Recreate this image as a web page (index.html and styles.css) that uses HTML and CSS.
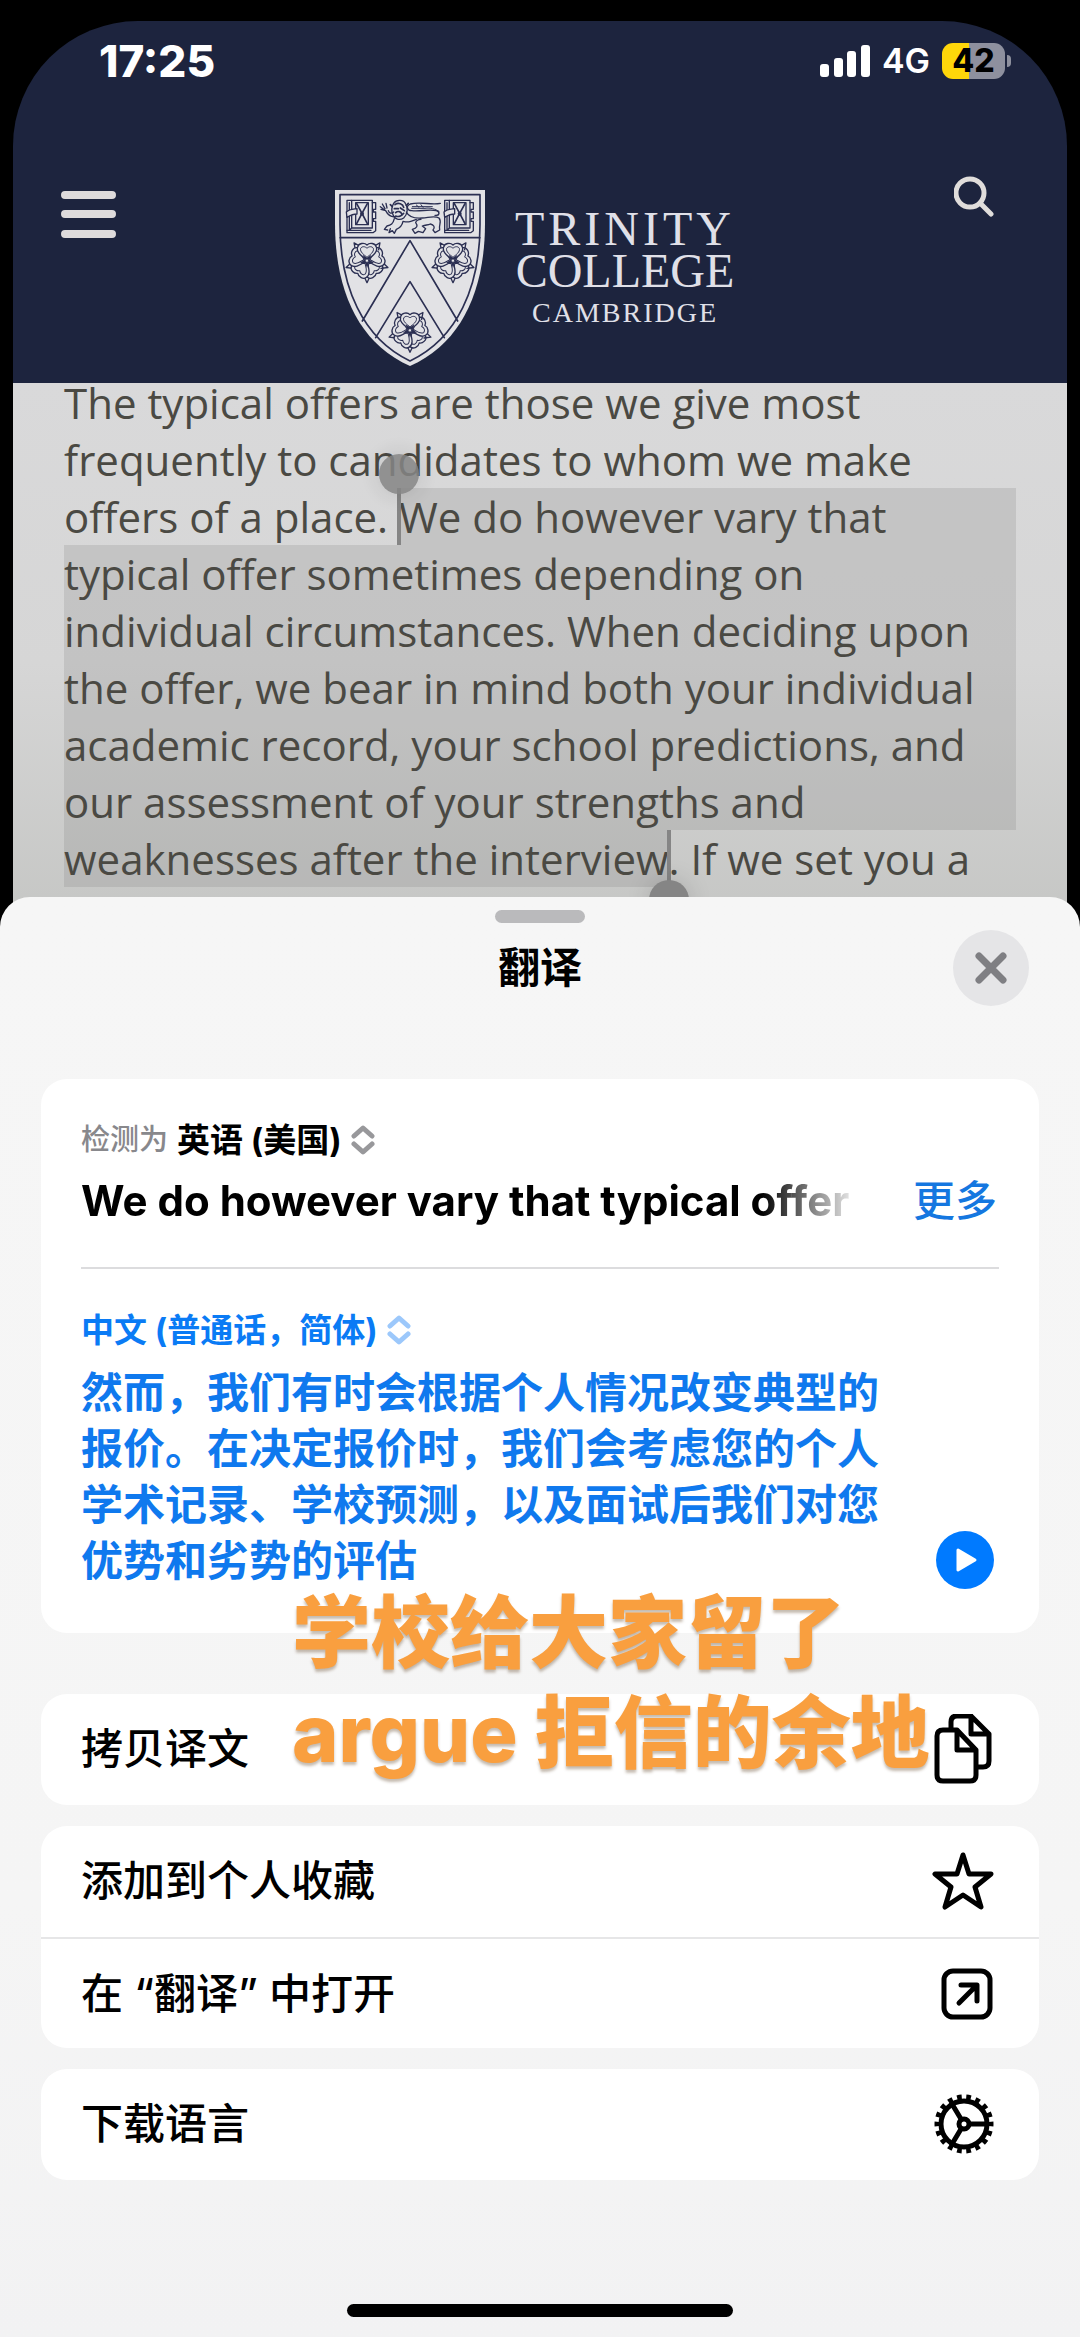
FILE: index.html
```html
<!DOCTYPE html>
<html lang="zh-CN">
<head>
  <meta charset="UTF-8">
  <meta name="viewport" content="width=device-width, initial-scale=1.0">
  <title>翻译</title>
  <link rel="stylesheet" href="styles.css">
</head>
<body>
  <div class="page">
    <header class="header">
      <div class="status">
        <span class="time">17:25</span>
        <svg class="signal" width="50" height="32" viewBox="0 0 50 32" fill="#fff">
          <rect x="0" y="19" width="9" height="13" rx="3"/>
          <rect x="14" y="13" width="9" height="19" rx="3"/>
          <rect x="27" y="6" width="9" height="26" rx="3"/>
          <rect x="41" y="0" width="9" height="32" rx="3"/>
        </svg>
        <span class="network">4G</span>
        <span class="battery">42</span>
      </div>

      <nav class="nav">
        <button class="icon-button menu" aria-label="Menu">
          <svg width="55" height="48" viewBox="0 0 55 48" stroke="#dedbdc" stroke-width="8" stroke-linecap="round">
            <path d="M4 5H51M4 24H51M4 44H51"/>
          </svg>
        </button>

        <a class="logo" href="#">
          <svg width="150" height="176" viewBox="0 0 450 528" fill="none" stroke="#2b2f52" stroke-width="4" stroke-linejoin="round" stroke-linecap="round">
            <defs>
              <g id="petal">
                <path d="M-9 -47L0 -66L9 -47" transform="rotate(36)"/>
                <path fill="#e2e2e5" d="M0 0C-12 -12 -34 -24 -28 -41C-25 -53 -8 -55 0 -47C8 -55 25 -53 28 -41C34 -24 12 -12 0 0Z"/>
                <path stroke-width="3" d="M0 -10C-9 -18 -22 -26 -19 -37C-15 -44 -5 -43 0 -37C5 -43 15 -44 19 -37C22 -26 9 -18 0 -10"/>
              </g>
              <g id="rose">
                <use href="#petal" transform="rotate(144)"/>
                <use href="#petal" transform="rotate(216)"/>
                <use href="#petal" transform="rotate(72)"/>
                <use href="#petal" transform="rotate(288)"/>
                <use href="#petal"/>
                <path fill="#2b2f52" stroke="none" d="M0 22L-5 8L-21 7L-8 -3L-13 -18L0 -9L13 -18L8 -3L21 7L5 8Z"/>
                <circle r="5" fill="#e2e2e5" stroke-width="2"/>
              </g>
              <g id="book">
                <path d="M36 31H112V38H122V58H115V66H122V86H115V94H122V122L114 128H36Z"/>
                <path d="M43 38V121H108M50 31V114H112V38M62 38H100V104H62ZM36 121H43M50 114L43 121"/>
                <path d="M65 41L81 70L65 101M97 41L81 70L97 101" stroke-width="5"/>
                <path fill="#e2e2e5" d="M34 66C42 58 52 58 66 56V72C54 72 46 76 36 82Z"/>
                <circle cx="81" cy="71" r="6" fill="#2b2f52" stroke="none"/>
              </g>
            </defs>
            <path fill="#e2e2e5" stroke="none" d="M0 0H450V100C450 300 380 460 225 528C70 460 0 300 0 100Z"/>
            <path stroke-width="5" d="M15 14H435V104C435 290 367 446 225 513C83 446 15 290 15 104ZM15 143H435M82 393L225 152L368 393M122 443L225 275L328 443"/>
            <use href="#book"/>
            <use href="#book" transform="translate(293 0)"/>
            <!-- lion -->
            <path d="M182 80C168 82 158 74 152 62L138 58M152 62L136 50M150 56L142 42M156 54L153 40M160 62C162 70 170 72 176 66"/>
            <path d="M176 40C184 28 206 28 212 42C220 54 218 72 206 84C194 92 178 88 174 74C168 62 170 50 176 40Z"/>
            <path stroke-width="5" d="M180 44C190 36 204 42 206 52M178 56H190M196 54L208 62M182 68C188 62 198 64 200 72M182 78C190 82 200 78 206 70M172 50L166 44M214 46L220 40"/>
            <path d="M178 86C174 102 168 106 156 108L148 118L158 120M166 116L162 128L172 122L178 130L184 118C194 114 202 104 204 94C222 98 230 94 244 88"/>
            <path d="M214 66C222 82 240 86 262 84C284 82 300 76 312 84C322 96 310 104 314 120L300 128L294 120C302 112 296 104 286 102C278 106 272 104 262 108L272 116L264 128L250 124L240 130L232 118C246 114 250 108 242 98C244 90 250 88 258 88"/>
            <path d="M316 40C290 46 256 34 226 42C212 48 216 62 230 62C256 66 280 56 304 62C316 66 314 78 300 76"/>
            <path stroke-width="3" d="M232 50H292M230 55H270C286 52 302 58 312 64M244 45L252 52M258 44L264 52"/>
            <use href="#rose" transform="translate(96 212)"/>
            <use href="#rose" transform="translate(354 212)"/>
            <use href="#rose" transform="translate(225 421)"/>
          </svg>
          <span class="logo-text">
            <span class="logo-trinity">TRINITY</span>
            <span>COLLEGE</span>
            <span class="logo-place">CAMBRIDGE</span>
          </span>
        </a>

        <button class="icon-button" aria-label="Search">
          <svg width="40" height="41" viewBox="0 0 40 41" fill="none" stroke="#e0dddb" stroke-width="5" stroke-linecap="round">
            <circle cx="16" cy="17" r="14"/>
            <path d="M26 27L37 38"/>
          </svg>
        </button>
      </nav>
    </header>

    <main class="article" lang="en">
      <p class="article-text">
        <span class="line">The typical offers are those we give most</span>
        <span class="line">frequently to candidates to whom we make</span>
        <span class="line">offers of a place. <mark class="fill handle-start">We do however vary that</mark></span>
        <mark class="line">typical offer sometimes depending on</mark>
        <mark class="line">individual circumstances. When deciding upon</mark>
        <mark class="line">the offer, we bear in mind both your individual</mark>
        <mark class="line">academic record, your school predictions, and</mark>
        <mark class="line">our assessment of your strengths and</mark>
        <span class="line"><mark class="handle-end">weaknesses after the interview</mark>. If we set you a</span>
        <span class="line">more challenging offer, this is because we</span>
      </p>
    </main>
  </div>

  <section class="sheet">
    <div class="grabber"></div>
    <div class="sheet-header">
      <h1 class="title">翻译</h1>
      <button class="close" aria-label="关闭">
        <svg width="32" height="32" viewBox="0 0 32 32" stroke="#7f7f83" stroke-width="7" stroke-linecap="round">
          <path d="M4 4L28 28M28 4L4 28"/>
        </svg>
      </button>
    </div>

    <div class="card translation">
      <button class="language">
        <span class="detected">检测为</span>
        <span>英语 (美国)</span>
        <svg class="chevrons" width="24" height="30" viewBox="0 0 24 30">
          <path d="M3 11L12 3L21 11M3 19L12 27L21 19"/>
        </svg>
      </button>
      <div class="source">
        <p class="source-text" lang="en">We do however vary that typical offer</p>
        <button class="more">更多</button>
      </div>
      <hr class="divider">
      <button class="language target">
        <span>中文 (普通话，简体)</span>
        <svg class="chevrons" width="24" height="30" viewBox="0 0 24 30">
          <path d="M3 11L12 3L21 11M3 19L12 27L21 19"/>
        </svg>
      </button>
      <div class="result">
        <p class="result-text">然而，我们有时会根据个人情况改变典型的报价。在决定报价时，我们会考虑您的个人学术记录、学校预测，以及面试后我们对您优势和劣势的评估</p>
        <button class="play" aria-label="播放">
          <svg width="58" height="58" viewBox="0 0 58 58">
            <path fill="#fff" stroke="#fff" stroke-width="3" stroke-linejoin="round" d="M22 19L39 29L22 39Z"/>
          </svg>
        </button>
      </div>
      <p class="note">学校给大家留了<br>argue 拒信的余地</p>
    </div>

    <div class="card">
      <button class="action">
        拷贝译文
        <svg class="icon" width="62" height="70" viewBox="0 0 62 70">
          <path d="M19 15V8Q19 2 25 2H39L57 20V47Q57 53 51 53H46M39 2V20H57"/>
          <path d="M11 16H25L44 36V61Q44 67 38 67H11Q5 67 5 61V22Q5 16 11 16ZM25 16V36H44"/>
        </svg>
      </button>
    </div>

    <div class="card">
      <button class="action">
        添加到个人收藏
        <svg class="icon" width="62" height="70" viewBox="0 0 62 70">
          <path d="M31 9L37 28H59L43 41L49 61L31 49L13 61L19 41L3 28H25Z"/>
        </svg>
      </button>
      <button class="action">
        在 “翻译” 中打开
        <svg class="icon" width="62" height="70" viewBox="0 0 62 70">
          <rect x="12" y="12" width="46" height="46" rx="9"/>
          <path d="M27 44L44 27M29 26H45V42"/>
        </svg>
      </button>
    </div>

    <div class="card">
      <button class="action">
        下载语言
        <svg class="icon" width="62" height="70" viewBox="0 0 62 70">
          <circle class="teeth" cx="32" cy="35" r="26" pathLength="36"/>
          <circle cx="32" cy="35" r="23"/>
          <circle cx="32" cy="35" r="5"/>
          <path d="M38 35H54M29 30L20 15M29 40L20 55"/>
        </svg>
      </button>
    </div>

    <div class="home-bar"></div>
  </section>
</body>
</html>
```

FILE: styles.css
```css
* {
  margin: 0;
  padding: 0;
  box-sizing: border-box;
}

body {
  min-height: 100vh;
  display: flex;
  flex-direction: column;
  background-color: #000;
  color: #000;
  font-family: Inter, "Noto Sans CJK SC", sans-serif;
}

button {
  border: none;
  background: none;
  color: inherit;
  font: inherit;
  cursor: pointer;
}

svg {
  display: block;
  flex: none;
}

/* Web page behind the sheet */
.page {
  margin: 21px 13px 0;
  border-radius: 125px 125px 0 0;
  overflow: hidden;
}

.header {
  background-color: #1d243e;
  color: #fff;
  padding-bottom: 17px;
}

.status {
  display: flex;
  align-items: center;
  padding: 22px 62px 0 86px;
}

.time {
  margin-right: auto;
  font-size: 44px;
  line-height: 36px;
  font-weight: 800;
}

.network {
  margin: 0 12px;
  font-size: 34px;
  line-height: 36px;
  font-weight: 600;
}

.battery {
  position: relative;
  width: 63px;
  border-radius: 11px;
  background: linear-gradient(to right, #ffd60a 43%, #8e909e 43%);
  color: #000;
  font-size: 32px;
  line-height: 36px;
  font-weight: 800;
  text-align: center;
}

.battery::after {
  content: "";
  position: absolute;
  left: 65px;
  top: 12px;
  width: 4px;
  height: 12px;
  border-radius: 0 4px 4px 0;
  background-color: #8e909e;
}

.nav {
  display: flex;
  justify-content: space-between;
  align-items: flex-start;
  padding: 97px 73px 0 48px;
}

.menu,
.logo {
  margin-top: 14px;
}

.logo {
  display: flex;
  gap: 30px;
  color: #e0e0e8;
  text-decoration: none;
}

.logo-text {
  display: flex;
  flex-direction: column;
  align-items: center;
  padding-top: 18px;
  font-family: "Liberation Serif", serif;
  font-size: 48px;
  line-height: 42px;
}

.logo-trinity {
  letter-spacing: 4px;
}

.logo-place {
  font-size: 28px;
  letter-spacing: 2px;
}

.article {
  overflow: hidden;
  padding: 0 51px;
  background: linear-gradient(#d9d9da, #d6d6d6 50%, #c4c5c3);
}

.article-text {
  margin-top: -9px;
  color: #4a4943;
  font-family: "Open Sans", sans-serif;
  font-size: 42px;
  line-height: 57px;
  white-space: pre;
  display: flex;
  flex-direction: column;
}

.line {
  display: flex;
}

mark {
  position: relative;
  background-color: rgba(120, 120, 120, 0.2);
  color: inherit;
}

.fill {
  flex: 1;
}

.handle-start::before,
.handle-end::before {
  content: "";
  position: absolute;
  top: 0;
  width: 4px;
  height: 57px;
  background-color: #858585;
}

.handle-start::after,
.handle-end::after {
  content: "";
  position: absolute;
  width: 40px;
  height: 40px;
  border-radius: 50%;
  background-color: #858585;
  box-shadow: 0 0 24px rgba(0, 0, 0, 0.15);
}

.handle-start::before {
  left: -2px;
}

.handle-start::after {
  left: -20px;
  top: -34px;
  opacity: 0.85;
}

.handle-end::before {
  right: -2px;
}

.handle-end::after {
  right: -20px;
  top: 50px;
}

/* Translate sheet */
.sheet {
  position: relative;
  flex: 1;
  display: flex;
  flex-direction: column;
  margin-top: -47px;
  padding: 13px 41px 20px;
  border-radius: 30px 30px 0 0;
  background: linear-gradient(#f6f6f6, #f5f5f5 70%, #f2f2f3);
}

.grabber {
  align-self: center;
  width: 90px;
  height: 13px;
  border-radius: 7px;
  background-color: #bababc;
}

.sheet-header {
  display: grid;
  grid-template-columns: 1fr auto 1fr;
  align-items: center;
  margin: 7px 10px 73px;
}

.title {
  grid-column: 2;
  font-size: 42px;
  line-height: 56px;
  font-weight: 700;
}

.close {
  justify-self: end;
  display: grid;
  place-items: center;
  width: 76px;
  height: 76px;
  border-radius: 50%;
  background-color: #e5e5e7;
}

.card {
  margin-bottom: 21px;
  border-radius: 26px;
  background-color: #fff;
}

.translation {
  position: relative;
  margin-bottom: 61px;
  padding: 41px 40px 44px;
}

.language {
  display: flex;
  align-items: center;
  gap: 9px;
  font-size: 33px;
  line-height: 40px;
  font-weight: 700;
}

.detected {
  color: #88888c;
  font-size: 29px;
  font-weight: 500;
}

.chevrons {
  fill: none;
  stroke: #98989b;
  stroke-width: 5;
  stroke-linecap: round;
  stroke-linejoin: round;
}

.target {
  color: #0a7bf5;
}

.target .chevrons {
  stroke: #9cc8fb;
}

.source {
  display: flex;
  justify-content: space-between;
  gap: 52px;
  margin: 13px 2px 38px 0;
  font-size: 42px;
  line-height: 56px;
}

.source-text {
  flex: 1;
  min-width: 0;
  overflow: hidden;
  white-space: nowrap;
  font-weight: 700;
  mask-image: linear-gradient(to left, transparent, #000 100px);
}

.more {
  color: #1577e0;
  font-weight: 500;
}

.divider {
  border: none;
  border-top: 2px solid #dcdcde;
  margin-bottom: 41px;
}

.result {
  display: flex;
  align-items: flex-end;
  justify-content: space-between;
  gap: 20px;
  margin-top: 15px;
  padding-right: 5px;
}

.result-text {
  color: #0f79ee;
  font-size: 42px;
  line-height: 56px;
  font-weight: 700;
}

.play {
  flex: none;
  border-radius: 50%;
  background-color: #007aff;
}

/* Note typed over the screen */
.note {
  position: absolute;
  z-index: 1;
  left: 251px;
  top: 504px;
  color: #f99f3f;
  font-size: 79px;
  line-height: 100px;
  font-weight: 800;
  white-space: nowrap;
  text-shadow: 0 3px 3px rgba(90, 60, 30, 0.35);
  pointer-events: none;
}

.action {
  display: flex;
  justify-content: space-between;
  align-items: center;
  width: 100%;
  padding: 20px 45px 21px 40px;
  font-size: 42px;
  line-height: 56px;
  font-weight: 500;
  text-align: left;
}

.action + .action {
  border-top: 2px solid #e6e6e7;
  padding-bottom: 19px;
}

.icon {
  fill: none;
  stroke: #000;
  stroke-width: 5;
  stroke-linecap: round;
  stroke-linejoin: round;
}

.teeth {
  stroke-width: 7;
  stroke-linecap: butt;
  stroke-dasharray: 1 1;
  stroke-dashoffset: 0.5;
}

.home-bar {
  align-self: center;
  width: 386px;
  height: 13px;
  margin-top: auto;
  border-radius: 7px;
  background-color: #000;
}
```
